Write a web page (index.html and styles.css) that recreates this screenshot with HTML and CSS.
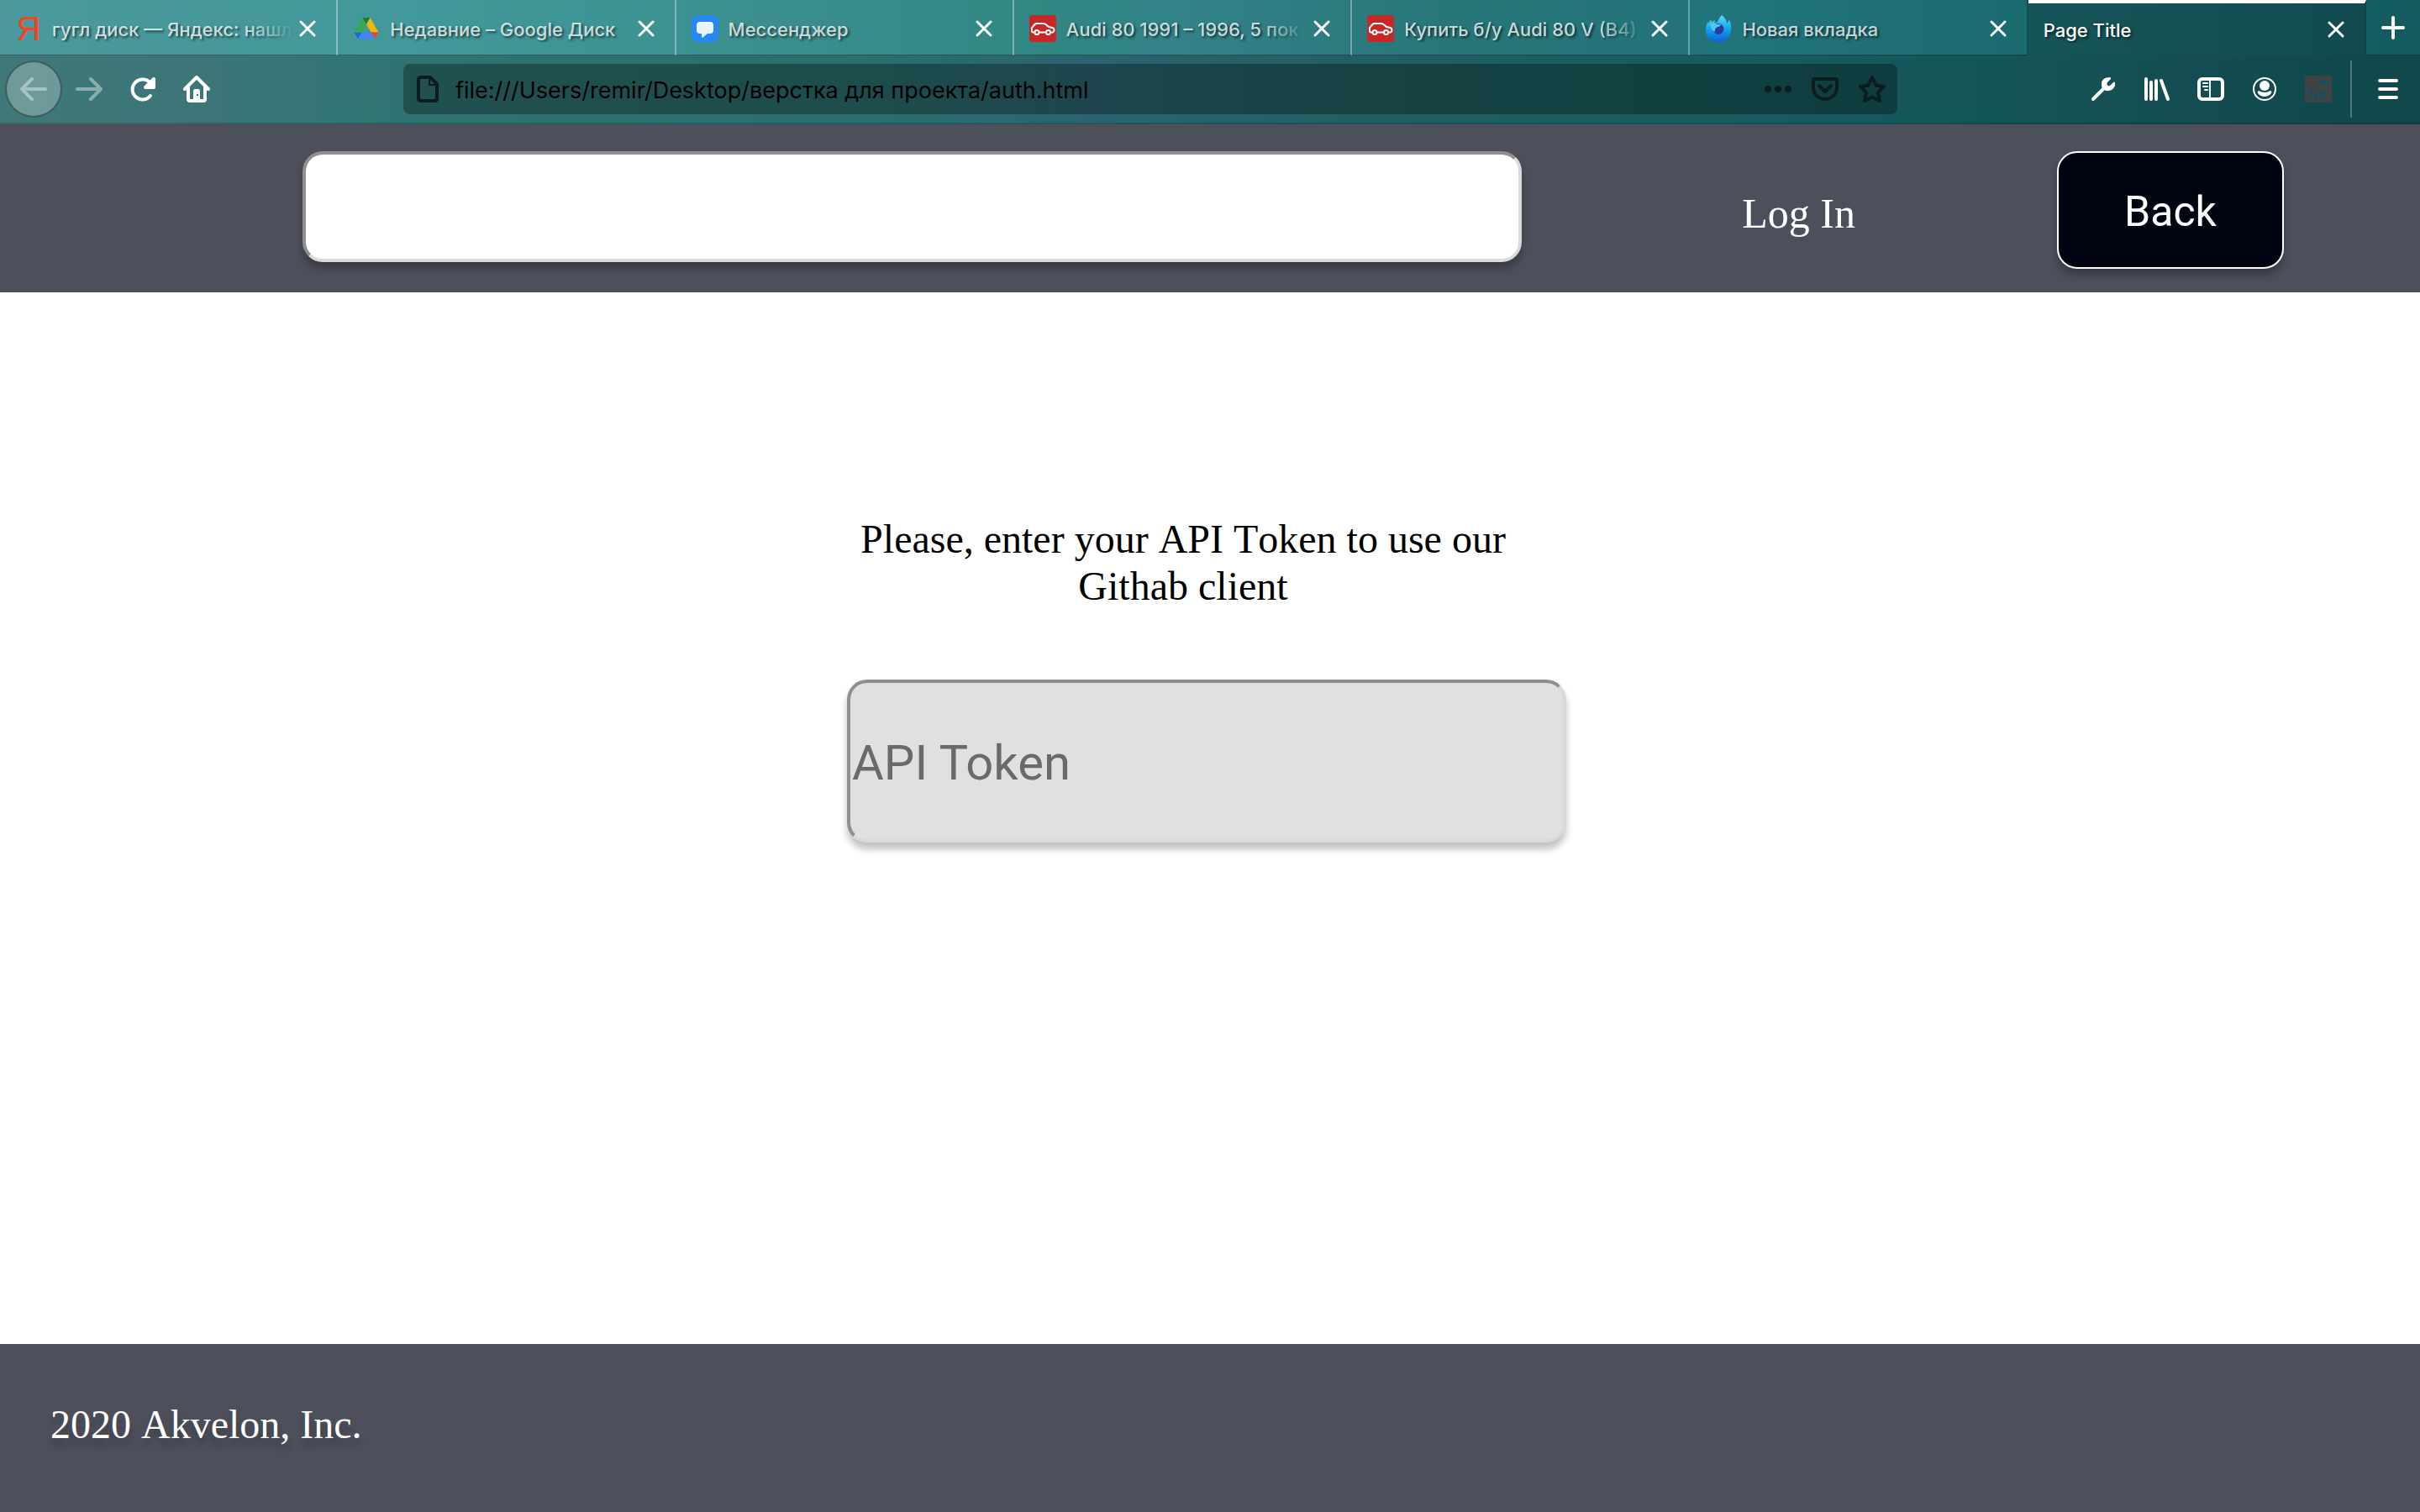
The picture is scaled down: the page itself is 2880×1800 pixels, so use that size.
FILE: index.html
```html
<!DOCTYPE html>
<html lang="ru">
<head>
<meta charset="utf-8">
<title>Page Title</title>
<link rel="stylesheet" href="styles.css">
</head>
<body>
<svg class="defs" aria-hidden="true">
  <symbol id="close" viewBox="0 0 32 32"><path d="M8 8l16 16M24 8L8 24" fill="none" stroke="currentColor" stroke-width="3" stroke-linecap="round"/></symbol>
  <symbol id="car" viewBox="0 0 32 32">
    <rect width="32" height="32" rx="3" fill="#c62828"/>
    <path d="M6 20.500H4.500Q3 20.500 3 18.500V15L7 10.500Q7.500 10 8.500 10H16Q18 10 19.500 11L23 14L27.500 15Q29.500 15.500 29.500 18Q29.500 20 28 20.500H26M12 20.500H19.500" fill="none" stroke="#fff" stroke-width="2"/>
    <circle cx="9" cy="20.500" r="2.500" fill="none" stroke="#fff" stroke-width="2"/><circle cx="22.500" cy="20.500" r="2.500" fill="none" stroke="#fff" stroke-width="2"/>
  </symbol>
</svg>

<div class="tabs">
  <div class="tab">
    <span class="tab-icon yandex">Я</span>
    <span class="tab-title fade">гугл диск — Яндекс: нашл</span>
    <button class="tab-close" aria-label="Закрыть вкладку"><svg class="icon"><use href="#close"/></svg></button>
  </div>
  <div class="tab">
    <svg class="tab-icon" viewBox="0 0 32 32">
      <path d="M11.500 3L16 11L7 27L2 18.500z" fill="#34a853"/>
      <path d="M11.500 3H20.500L16 11z" fill="#188038"/>
      <path d="M20.500 3L30.500 20.500H21.500L16 11z" fill="#eab90c"/>
      <path d="M1.500 20.500H10.500L6 28z" fill="#1967d2"/>
      <path d="M10.500 20.500H21.500L26 28.500H6z" fill="#4285f4"/>
      <path d="M21.500 20.500H30.500L26 28z" fill="#ea4335"/>
      <path d="M6 13L1.500 20.500H10.500L13 16z" fill="#34a853"/>
    </svg>
    <span class="tab-title">Недавние – Google Диск</span>
    <button class="tab-close" aria-label="Закрыть вкладку"><svg class="icon"><use href="#close"/></svg></button>
  </div>
  <div class="tab">
    <svg class="tab-icon" viewBox="0 0 32 32">
      <rect width="32" height="32" rx="8" fill="#2787f5"/>
      <path d="M10 8H22Q26 8 26 12V18Q26 22 22 22H19L13.500 26.500Q12 27 12 25.500V22H10Q6 22 6 18V12Q6 8 10 8z" fill="#eaf3f7"/>
    </svg>
    <span class="tab-title">Мессенджер</span>
    <button class="tab-close" aria-label="Закрыть вкладку"><svg class="icon"><use href="#close"/></svg></button>
  </div>
  <div class="tab">
    <svg class="tab-icon"><use href="#car"/></svg>
    <span class="tab-title fade">Audi 80 1991 – 1996, 5 пок</span>
    <button class="tab-close" aria-label="Закрыть вкладку"><svg class="icon"><use href="#close"/></svg></button>
  </div>
  <div class="tab">
    <svg class="tab-icon"><use href="#car"/></svg>
    <span class="tab-title fade">Купить б/у Audi 80 V (B4)</span>
    <button class="tab-close" aria-label="Закрыть вкладку"><svg class="icon"><use href="#close"/></svg></button>
  </div>
  <div class="tab">
    <svg class="tab-icon" viewBox="0 0 32 32">
      <defs><linearGradient id="flame" x1="0" y1="0" x2="0" y2="1"><stop offset="0" stop-color="#5cdcf5"/><stop offset=".5" stop-color="#14a5ee"/><stop offset="1" stop-color="#0b5fd8"/></linearGradient></defs>
      <path d="M20 0Q26 5 26 10Q29 7 29 5Q32 13 31 18A15 15 0 1 1 1 17Q1 11 4 8L4.500 10L6.500 5L8 8L12 6L11.500 9L15 8.500Q16 4 20 0z" fill="url(#flame)"/>
      <circle cx="16" cy="16.500" r="6.500" fill="#2b3aa0"/>
      <path d="M5 11Q10 8 14 11H19Q18 14 14 14.500Q11 17 12 20Q7 18 7 13z" fill="#4cc8f4"/>
    </svg>
    <span class="tab-title">Новая вкладка</span>
    <button class="tab-close" aria-label="Закрыть вкладку"><svg class="icon"><use href="#close"/></svg></button>
  </div>
  <div class="tab active">
    <span class="tab-title">Page Title</span>
    <button class="tab-close" aria-label="Закрыть вкладку"><svg class="icon"><use href="#close"/></svg></button>
  </div>
  <button class="new-tab" aria-label="Новая вкладка"><svg class="icon" viewBox="0 0 32 32"><path d="M16 4V28M4 16H28" fill="none" stroke="#fff" stroke-width="4" stroke-linecap="round"/></svg></button>
</div>

<div class="toolbar">
  <div class="nav-tools">
    <button class="tool back dim" aria-label="Назад"><svg class="icon line" viewBox="0 0 32 32"><path d="M30 16H3M14 4L2 16L14 28"/></svg></button>
    <button class="tool dim" aria-label="Вперёд"><svg class="icon line" viewBox="0 0 32 32"><path d="M2 16H29M18 4L30 16L18 28"/></svg></button>
    <button class="tool" aria-label="Обновить"><svg class="icon line" viewBox="0 0 32 32"><path d="M25 24A12 12 0 1 1 25 9"/><path d="M29 4V14H19z" fill="currentColor"/></svg></button>
    <button class="tool" aria-label="Домой"><svg class="icon line" viewBox="0 0 32 32"><path d="M2 16L16 2L30 16M6 14V28Q6 30 8 30H24Q26 30 26 28V14"/><path d="M12 30V19Q12 16 14 16H18Q20 16 20 19V30z" fill="currentColor" stroke="none"/><rect x="16" y="22" width="2" height="2" fill="#3a7677" stroke="none"/></svg></button>
  </div>
  <div class="urlbar">
    <svg class="icon line" viewBox="0 0 32 32"><path d="M4 5Q4 2 7 2H18L26 10V27Q26 30 23 30H7Q4 30 4 27z"/><path d="M17 2V11H26" stroke-width="2"/></svg>
    <input class="url" type="text" aria-label="Адрес" value="file:///Users/remir/Desktop/верстка для проекта/auth.html">
    <button class="url-tool" aria-label="Действия"><svg class="icon" viewBox="0 0 32 32"><circle cx="4" cy="16" r="4"/><circle cx="16" cy="16" r="4"/><circle cx="28" cy="16" r="4"/></svg></button>
    <button class="url-tool" aria-label="Pocket"><svg class="icon line" viewBox="0 0 32 32"><path d="M4 4H28Q30 4 30 6V14A14 14 0 0 1 2 14V6Q2 4 4 4zM9 12L16 19L23 12"/></svg></button>
    <button class="url-tool" aria-label="В закладки"><svg class="icon line" viewBox="0 0 32 32"><path d="M16 2L20.500 11.500L30 13L23 20L25 30L16 25.500L7 30L9 20L2 13L11.500 11.500z"/></svg></button>
  </div>
  <div class="side-tools">
    <button class="tool" aria-label="Инструменты"><svg class="icon" viewBox="0 0 32 32"><path d="M4 28L18 14" fill="none" stroke="#fff" stroke-width="4" stroke-linecap="round"/><path d="M24 2Q14 2 14 10Q14 13 14.500 14L18 17.500Q22 19 26 17Q31 14 30 8Q29 7 28 8L24 12Q22 12.500 21 11.500Q19.500 10 21 8L25 4Q25.500 2.500 24 2z"/></svg></button>
    <button class="tool" aria-label="Библиотека"><svg class="icon line" viewBox="0 0 32 32"><path d="M3 4V28M9 8V28M15 6V28M21 6L29 28"/></svg></button>
    <button class="tool" aria-label="Боковая панель"><svg class="icon line" viewBox="0 0 32 32"><rect x="2" y="4" width="28" height="24" rx="4"/><path d="M15 4V28M7 9H12M7 13H12M9 17H12" stroke-width="2"/></svg></button>
    <button class="tool" aria-label="Аккаунт"><svg class="icon" viewBox="0 0 32 32"><circle cx="16" cy="16" r="13" fill="none" stroke="#fff" stroke-width="2"/><circle cx="16" cy="12" r="6"/><path d="M9 18Q16 22 23 18Q25 18.500 24 21Q21 25 16 25Q11 25 8 21Q7 18.500 9 18z"/></svg></button>
    <button class="tool" aria-label="Selenium"><svg class="icon" viewBox="0 0 32 32"><rect width="32" height="32" fill="#424143"/><path d="M17 5H24V7L28 5V11L24 9V11H17z" fill="#14505a"/><text class="se" x="2" y="29">Se</text></svg></button>
    <span class="divider"></span>
    <button class="tool menu" aria-label="Меню"><svg class="icon line" viewBox="0 0 32 32"><path d="M6 6H26M6 16H26M6 26H26"/></svg></button>
  </div>
</div>

<header class="header">
  <input class="search" type="text" aria-label="Search">
  <a class="login" href="#">Log In</a>
  <button class="back-button">Back</button>
</header>

<main class="main">
  <label class="prompt" for="token">Please, enter your API Token to use our Githab client</label>
  <input class="token" id="token" type="text" placeholder="API Token">
</main>

<footer class="footer">2020 Akvelon, Inc.</footer>
</body>
</html>
```
FILE: styles.css
```css
* { box-sizing: border-box; }

body {
  margin: 0;
  min-height: 100vh;
  display: flex;
  flex-direction: column;
  background: #fff;
  font-family: "Liberation Serif", serif;
  font-size: 48px;
  line-height: 56px;
}

button { margin: 0; padding: 0; border: 0; background: none; color: inherit; }
.defs { display: none; }
.icon { display: block; flex: none; width: 32px; height: 32px; fill: currentColor; }
.line { fill: none; stroke: currentColor; stroke-width: 4; stroke-linecap: round; stroke-linejoin: round; }

/* Tab strip */
.tabs {
  display: flex;
  height: 66px;
  color: #fff;
  font: 500 22px/30px Inter, sans-serif;
  background: linear-gradient(90deg, #4b999c, #42989a 17%, #3b908f 31%, #318784 43%, #328288 49%, #277679 60%, #21747a 72%, #1a6b6f 84%, #125a60);
}
.tab {
  flex: 1;
  min-width: 0;
  display: flex;
  align-items: center;
  padding: 2px 18px 0;
  border-right: 2px solid #ffffff59;
  border-bottom: 1px solid #00000059;
}
.tab:nth-child(6) { border-right-color: #00000040; }
.tab-icon { flex: none; width: 32px; height: 32px; margin-right: 12px; }
.yandex {
  color: #fc3f1d;
  font: 40px/32px "Liberation Sans Narrow", "Liberation Sans", sans-serif;
  text-align: center;
}
.tab-title {
  flex: 1;
  min-width: 0;
  overflow: hidden;
  white-space: nowrap;
  color: #ffffffbf;
  padding-top: 2px;
  text-shadow: 2px 2px 3px #0009;
}
.fade { -webkit-mask-image: linear-gradient(90deg, #000 80%, transparent); mask-image: linear-gradient(90deg, #000 80%, transparent); }
.tab-close { flex: none; }
.active {
  padding-top: 0;
  border-top: 4px solid #fff;
  border-bottom: 0;
  border-right-color: #0d4549;
  background: linear-gradient(90deg, #15555a, #114b50);
}
.active .tab-title { color: #fff; }
.new-tab { display: grid; place-items: center; width: 64px; border-bottom: 1px solid #00000059; }

/* Navigation toolbar */
.toolbar {
  display: flex;
  align-items: center;
  height: 82px;
  color: #fff;
  border-bottom: 2px solid #00000026;
  background: linear-gradient(90deg, #3e7878, #3b7578 9%, #2f7371 18%, #2a6f6d 35%, #2b6470 45%, #225f62 56%, #195c5e 70%, #15555a 82%, #144f53 88%, #0f474a);
}
.nav-tools { display: flex; padding-left: 6px; margin-right: 214px; }
.side-tools { display: flex; align-items: center; margin-left: 213px; padding-right: 6px; }
.tool { display: grid; place-items: center; width: 64px; height: 68px; }
.dim { color: #ffffff66; }
.back { width: 68px; border: 2px solid #0006; border-radius: 50%; background: #ffffff40; }
.divider { width: 2px; height: 68px; margin: 0 11px 0 6px; background: #ffffff40; }
.se { font: 700 20px "Liberation Sans", sans-serif; fill: #14505a; }
.urlbar {
  flex: 1;
  min-width: 0;
  display: flex;
  align-items: center;
  height: 60px;
  padding: 0 14px;
  border-radius: 8px;
  color: #0a1d1f;
  background: #0000004d;
}
.url {
  flex: 1;
  min-width: 0;
  height: 60px;
  margin-left: 16px;
  padding: 2px 0 0;
  border: 0;
  color: #000;
  background: none;
  font: 27px/40px Inter, sans-serif;
}
.url-tool { margin-left: 24px; }

/* Page header */
.header {
  display: flex;
  align-items: flex-start;
  min-height: 200px;
  padding: 32px 162px 28px 360px;
  color: #fff;
  background: #4d4f5b;
}
.search, .token {
  min-width: 0;
  padding: 4px 2px 0;
  border: 4px solid;
  border-color: #8f8f8f #dadada #dadada #8f8f8f;
  border-radius: 24px;
  box-shadow: 0 8px 8px #00000040;
  font: 58px/70px Roboto, sans-serif;
}
.search { flex: 1; height: 132px; background: #fff; }
.login {
  margin: 46px 240px 0 262px;
  color: #fff;
  font-size: 50px;
  text-decoration: none;
}
.back-button {
  width: 270px;
  height: 140px;
  padding-top: 4px;
  border: 2px solid #fff;
  border-radius: 24px;
  background: #000512;
  box-shadow: 0 8px 8px #00000040;
  font: 50px/56px Roboto, sans-serif;
}

/* Token form */
.main {
  flex: 1;
  display: flex;
  flex-direction: column;
  align-items: flex-start;
  gap: 83px;
  padding: 266px 35%;
}
.prompt { width: 800px; text-align: center; font-kerning: none; }
.token { width: 856px; height: 194px; background: #e1e0de; }
.token::placeholder { color: #6b6969; opacity: 1; }

.footer {
  min-height: 200px;
  padding: 68px 60px 76px;
  color: #fff;
  background: #4d4f5b;
  font-kerning: none;
  text-shadow: 0 8px 8px #00000040;
}
```
